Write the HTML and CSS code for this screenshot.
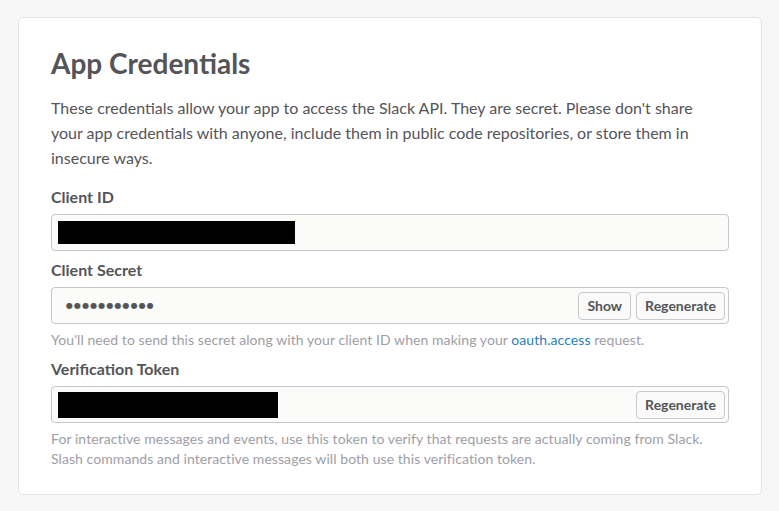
FILE: index.html
```html
<!DOCTYPE html>
<html lang="en">
<head>
<meta charset="UTF-8">
<title>App Credentials</title>
<link rel="stylesheet" href="styles.css">
</head>
<body>
<div class="card">
    <h2 class="title">App Credentials</h2>
    <p class="intro">These credentials allow your app to access the Slack API. They are secret. Please don't share your app credentials with anyone, include them in public code repositories, or store them in insecure ways.</p>

    <label class="label">Client ID</label>
    <div class="field">
        <span class="value"><span class="redact redact-id"></span></span>
    </div>

    <label class="label">Client Secret</label>
    <div class="field">
        <span class="value dots">●●●●●●●●●●●</span>
        <button class="btn">Show</button>
        <button class="btn">Regenerate</button>
    </div>
    <p class="hint">You'll need to send this secret along with your client ID when making your <a href="#">oauth.access</a> request.</p>

    <label class="label">Verification Token</label>
    <div class="field">
        <span class="value"><span class="redact redact-token"></span></span>
        <button class="btn">Regenerate</button>
    </div>
    <p class="hint">For interactive messages and events, use this token to verify that requests are actually coming from Slack. Slash commands and interactive messages will both use this verification token.</p>
</div>
</body>
</html>
```
FILE: styles.css
```css
*{margin:0;padding:0;box-sizing:border-box;}
body
{
    background: #f7f7f7;
    font-family: Lato, "Open Sans", sans-serif;
    color: #555459;
    padding: 17px 17px 17px 18px;
}
.card
{
    width: 744px;
    background: #fff;
    border: 1px solid #e3e3e3;
    border-radius: 5px;
    padding: 28px 32px 25px 32px;
}
.title
{
    font-size: 28px;
    font-weight: 700;
    line-height: 34px;
    margin-bottom: 15px;
}
.intro
{
    font-size: 16px;
    line-height: 25px;
    padding-right: 12px;
    margin-bottom: 17px;
}
.label
{
    display: block;
    font-size: 16px;
    font-weight: 700;
    line-height: 20px;
    margin-bottom: 7px;
}
.field
{
    display: flex;
    align-items: center;
    gap: 5px;
    height: 37px;
    background: #fbfbfa;
    border: 1px solid #c7c7c7;
    border-radius: 4px;
    padding: 0 3px 0 6px;
    margin-bottom: 9px;
}
.value
{
    flex: 1;
    display: flex;
    align-items: center;
}
.redact
{
    display: block;
    background: #000;
}
.redact-id
{
    width: 237px;
    height: 23px;
}
.redact-token
{
    width: 220px;
    height: 26px;
    margin-top: 1px;
}
.dots
{
    font-family: "DejaVu Sans", sans-serif;
    font-size: 8px;
    letter-spacing: 1.1px;
    color: #555459;
    padding-left: 8px;
}
.btn
{
    font-family: Lato, "Open Sans", sans-serif;
    font-size: 14px;
    font-weight: 700;
    color: #555459;
    background: #fafafa;
    border: 1px solid #cacaca;
    border-radius: 4px;
    height: 28px;
    padding: 0 8px;
}
.hint
{
    font-size: 14px;
    line-height: 20px;
    letter-spacing: 0.07px;
    color: #9e9ea6;
    margin-top: -3px;
    margin-bottom: 9px;
}
.hint:last-child
{
    margin-bottom: 0;
}
.hint a
{
    color: #2a80b9;
    text-decoration: none;
}
```
